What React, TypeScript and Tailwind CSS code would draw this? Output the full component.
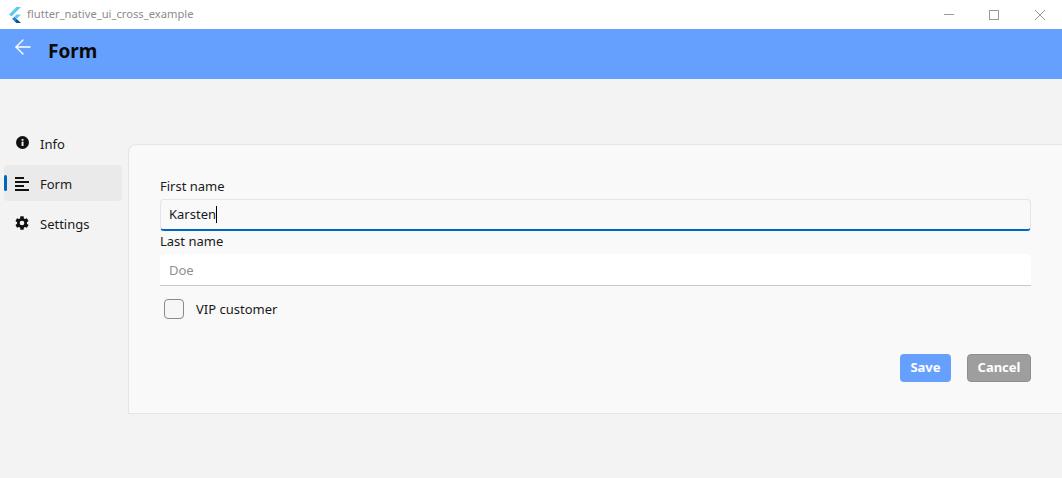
import React from "react";
import { ArrowLeft } from "lucide-react";

const font = "font-['Noto_Sans',sans-serif]";

function NavItem({ label, active, children }: { label: string; active?: boolean; children: React.ReactNode }) {
  return (
    <div className={`relative flex h-9 items-center rounded-[4px] pl-[11px] ${active ? "bg-[#eaeaea]" : ""}`}>
      {active && <div className="absolute left-0 top-[10px] h-4 w-[3px] rounded-full bg-[#0067c0]" />}
      <div className="flex w-[14px] items-center justify-center">{children}</div>
      <span className="ml-[11px] pt-[3px] text-[13px] text-[#1a1a1a]">{label}</span>
    </div>
  );
}

export default function App() {
  return (
    <div className={`flex h-[478px] w-[1062px] flex-col overflow-hidden bg-[#f3f3f3] ${font}`}>
      <div className="flex h-[29px] items-center bg-white">
        <svg width="14" height="16" viewBox="0 0 14 16" className="ml-2">
          <path d="M8.5 0H13L3.5 9.5 1 7.5z" fill="#5cc8f8" />
          <path d="M8.5 7.5H13L8.7 11.8 6.5 9.5z" fill="#5cc8f8" />
          <path d="M6.4 9.7 8.7 12 6.5 14.2 4.2 12z" fill="#2a80c8" />
          <path d="M6.5 14.2 8.7 12 13 16H8.5z" fill="#0d4f94" />
        </svg>
        <span className="ml-[5px] text-[11.2px] text-[#8c8c8c]">flutter_native_ui_cross_example</span>
        <div className="ml-auto flex items-center pr-[17px]">
          <div className="h-px w-[10px] bg-[#999999]" />
          <div className="ml-[35px] h-[10px] w-[10px] border border-[#999999]" />
          <svg width="10" height="10" viewBox="0 0 10 10" className="ml-[36px]">
            <path d="M0 0 10 10M10 0 0 10" stroke="#999999" strokeWidth="1" fill="none" />
          </svg>
        </div>
      </div>

      <div className="flex h-[50px] items-start bg-[#66a0ff] pl-[11px]">
        <ArrowLeft size={24} strokeWidth={1.4} className="mt-[6px] text-white" />
        <span className="ml-[13px] mt-[10px] text-[19px] font-bold leading-6 text-[#0a0a0a]">Form</span>
      </div>

      <div className="flex flex-1 pb-[64px] pt-[45px]">
        <div className="flex w-[128px] flex-col gap-1 pl-1 pr-[6px] pt-[1px]">
          <NavItem label="Info">
            <svg width="13" height="13" viewBox="0 0 13 13" className="-mt-px">
              <circle cx="6.5" cy="6.5" r="6.5" fill="#111" />
              <rect x="5.6" y="5.6" width="1.9" height="4.4" fill="#f3f3f3" />
              <rect x="5.6" y="3" width="1.9" height="1.7" fill="#f3f3f3" />
            </svg>
          </NavItem>
          <NavItem label="Form" active>
            <svg width="14" height="14" viewBox="0 0 14 14" className="mt-px">
              <rect x="0" y="0" width="9" height="2" fill="#111" />
              <rect x="0" y="4" width="14" height="2" fill="#111" />
              <rect x="0" y="8" width="9" height="2" fill="#111" />
              <rect x="0" y="12" width="14" height="2" fill="#111" />
            </svg>
          </NavItem>
          <NavItem label="Settings">
            <svg width="16" height="16" viewBox="0 0 24 24" className="-mt-px shrink-0">
              <path
                fillRule="evenodd"
                fill="#111"
                d="M19.4 13a7.5 7.5 0 0 0 0-2l2.4-1.9-2.4-4.1-2.8 1.1a7.5 7.5 0 0 0-1.7-1L14.4 2H9.6l-.5 3.1a7.5 7.5 0 0 0-1.7 1L4.6 5 2.2 9.1 4.6 11a7.5 7.5 0 0 0 0 2l-2.4 1.9L4.6 19l2.8-1.1a7.5 7.5 0 0 0 1.7 1l.5 3.1h4.8l.5-3.1a7.5 7.5 0 0 0 1.7-1l2.8 1.1 2.4-4.1zM12 15.5a3.5 3.5 0 1 1 0-7 3.5 3.5 0 0 1 0 7z"
              />
            </svg>
          </NavItem>
        </div>

        <div className="mt-5 flex-1 rounded-tl-lg border-y border-l border-[#e5e5e5] bg-[#f9f9f9] pl-[31px] pr-[31px] pt-[32px]">
          <div className="text-[13px] leading-[18px] text-[#1a1a1a]">First name</div>
          <div className="mt-[4px] flex h-[32px] items-center rounded-[4px] border border-b-2 border-[#e5e5e5] border-b-[#0067c0] bg-[#f9f9f9] pl-[8px] text-[13px] text-[#1a1a1a]">
            Karsten
            <span className="h-[17px] w-px bg-black" />
          </div>
          <div className="mt-[1px] text-[13px] leading-[18px] text-[#1a1a1a]">Last name</div>
          <div className="mt-[4px] flex h-[32px] items-center rounded-t-[4px] border-b border-[#c8c8c8] bg-white pl-[9px] pt-[3px] text-[13px] text-[#8f8f8f]">
            Doe
          </div>
          <div className="ml-1 mt-[13px] flex items-center">
            <div className="h-5 w-5 rounded-[4px] border border-[#8a8a8a] bg-[#f6f6f6]" />
            <span className="ml-3 pt-[1px] text-[13px] text-[#1a1a1a]">VIP customer</span>
          </div>
          <div className="mt-[34px] flex justify-end gap-4">
            <div className="flex h-[28px] w-[51px] items-center justify-center rounded-[4px] bg-[#66a0ff] pt-[1px] text-[13px] font-bold text-white">Save</div>
            <div className="flex h-[28px] w-[64px] items-center justify-center rounded-[4px] border border-[#8f8f8f] bg-[#9e9e9e] pt-[1px] text-[13px] font-bold text-white">Cancel</div>
          </div>
        </div>
      </div>
    </div>
  );
}
